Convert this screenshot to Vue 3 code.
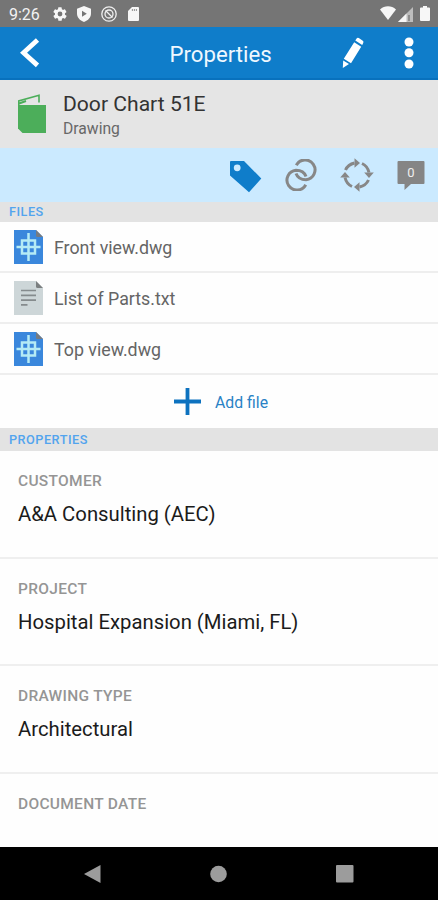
<template>
<div class="screen">
<div class="status-bar">
    <span class="clock">9:26</span>
    <svg class="gear" width="16" height="16" viewBox="0 0 24 24"><path d="M19.4 13a7.500 7.500 0 0 0 0-2l2.100-1.700a.5.5 0 0 0 .1-.6l-2-3.500a.5.5 0 0 0-.6-.2l-2.500 1a7.300 7.300 0 0 0-1.700-1l-.4-2.600a.5.5 0 0 0-.5-.4h-4a.5.5 0 0 0-.5.4L9 5a7.700 7.700 0 0 0-1.700 1l-2.500-1a.5.5 0 0 0-.6.200l-2 3.500a.5.5 0 0 0 .1.600L4.500 11a7.500 7.500 0 0 0 0 2l-2.100 1.700a.5.5 0 0 0-.1.600l2 3.500c.1.200.4.300.6.200l2.500-1a7.300 7.300 0 0 0 1.700 1l.4 2.600c0 .2.200.4.500.4h4c.3 0 .5-.2.500-.4L15 19a7.700 7.700 0 0 0 1.700-1l2.500 1c.2.100.5 0 .6-.2l2-3.500a.5.5 0 0 0-.1-.6zM12 15.600a3.600 3.600 0 1 1 0-7.200 3.600 3.600 0 0 1 0 7.200z" /></svg>
    <svg class="shield" width="14" height="16" viewBox="0 0 14 16"><path fill-rule="evenodd" d="M7 0l7 2.700v4.800c0 3.800-2.800 7-7 8.500-4.200-1.500-7-4.700-7-8.500V2.700zM5 4.800v6l4.800-3z" /></svg>
    <svg class="blocked" width="16" height="16" viewBox="0 0 16 16">
        <circle cx="8" cy="8" r="7.200" class="line" />
        <circle cx="8" cy="8" r="4" class="line" />
        <path d="M4.500 4.500l7 7" class="line" />
    </svg>
    <svg class="card" width="11" height="14" viewBox="0 0 11 14"><path fill-rule="evenodd" d="M4 0h6a1 1 0 0 1 1 1v12a1 1 0 0 1-1 1H1a1 1 0 0 1-1-1V4zM3.900 2v2h.8V2zm2 0v2h.8V2zm2 0v2h.8V2z" /></svg>
    <svg class="wifi" width="16" height="15" viewBox="0 0 16 15"><path d="M0 3.500C4.500-.8 11.500-.8 16 3.500L8 14z" /></svg>
    <svg class="signal" width="15" height="15" viewBox="0 0 15 15"><path d="M15 0v15H0z" opacity=".55" /><path d="M8.500 6.500V15H0z" /><path d="M11 8v6" class="line" /></svg>
    <svg class="battery" width="10" height="15" viewBox="0 0 10 15"><path d="M3 0h4v1.500h2q1 0 1 1V14q0 1-1 1H1q-1 0-1-1V2.500q0-1 1-1h2z" /></svg>
</div>

<header class="app-bar">
    <svg class="back" width="20" height="30" viewBox="0 0 20 30"><path d="M17.500 2L3.500 14.700l14 12.700" /></svg>
    <h1>Properties</h1>
    <svg class="pencil" width="22" height="32" viewBox="0 0 22 32"><path d="M12.200 5.200l7 4.500L9 26.300l-7.200-4.500zM13.300 3.500L14.600 1.600q.8-1.200 2.200-.5l4 2.600q1.200.9.400 2.200l-1 2zM1.200 23.500l5.800 3.600L.8 31z" /></svg>
    <svg class="dots" width="10" height="32" viewBox="0 0 10 32"><circle cx="5" cy="5" r="4.500" /><circle cx="5" cy="15.800" r="4.500" /><circle cx="5" cy="27" r="4.500" /></svg>
</header>

<section class="document">
    <svg width="28" height="40" viewBox="0 0 28 40">
        <path d="M0 11h28v28H4.500L0 34.500z" fill="#4cae5a" />
        <path d="M.7 13V7L21 1.200V8.500" fill="none" stroke="#4cae5a" stroke-width="1.600" />
        <path d="M1 9.500l7-2.500" stroke="#4cae5a" stroke-width="2" />
    </svg>
    <div>
        <h2>Door Chart 51E</h2>
        <p>Drawing</p>
    </div>
</section>

<nav class="tabs">
    <svg class="tag" width="32" height="32" viewBox="0 0 32 32"><path fill-rule="evenodd" fill="#0f7dca" d="M1 0h13l17.300 17.500L19 31.300 0 14.500V1q0-1 1-1zM7.200 3.400a3.400 3.400 0 1 0 0 6.800 3.400 3.400 0 0 0 0-6.800z" /></svg>
    <svg width="32" height="32" viewBox="0 0 32 32" fill="none" stroke="#878787" stroke-width="3">
        <path d="M11.300 6.300A9.900 9.900 0 1 1 21 20.700C15.500 20.700 12.300 18 11 14.500" />
        <path d="M20.700 25.700A9.900 9.900 0 1 1 11 11.300C16.500 11.300 19.700 14 21 17.500" />
    </svg>
    <svg width="34" height="34" viewBox="0 0 34 34">
        <g v-for="turn in [0, 90, 180, 270]" :key="turn" :transform="`rotate(${turn} 17 17)`">
            <path d="M5.500 12Q8 6.500 14.500 5" fill="none" stroke="#878787" stroke-width="3" />
            <path d="M14.500.2l5.500 4.800-5.500 4.800z" fill="#878787" />
        </g>
    </svg>
    <div class="comments">
        <svg width="28" height="29" viewBox="0 0 28 29"><path d="M1.500 0h25Q27.500 0 27.500 1v21q0 1-1 1H14l-6.500 6v-6h-6q-1 0-1-1V1q0-1 1-1z" fill="#858585" /></svg>
        <span>0</span>
    </div>
</nav>

<div class="section-title">FILES</div>
<ul class="files">
    <li v-for="file in files" :key="file.name">
        <svg v-if="file.type === 'dwg'" width="29" height="34" viewBox="0 0 29 34">
            <path d="M0 0h22l7 7v27H0z" fill="#3a87dc" />
            <path d="M22 0l7 7h-5.500Q22 7 22 5.500z" fill="#777b80" />
            <path d="M14.500 3v28M2.500 17h24M8 10.500h13v13H8z" fill="none" stroke="#b5ebf5" stroke-width="2.500" />
        </svg>
        <svg v-else width="29" height="34" viewBox="0 0 29 34">
            <path d="M0 0h22l7 7v27H0z" fill="#cdd6d8" />
            <path d="M22 0l7 7h-5.500Q22 7 22 5.500z" fill="#7b7f80" />
            <path d="M7 9.500h15M7 14.300h15M7 19.200h15M7 23.800h6.500" stroke="#858b8d" stroke-width="1.700" />
        </svg>
        <span>{{ file.name }}</span>
    </li>
</ul>
<button class="add-file" type="button">
    <svg width="27" height="27" viewBox="0 0 27 27"><path d="M13.500 0v27M0 13.500h27" stroke="#0d72bf" stroke-width="3.800" /></svg>
    <span>Add file</span>
</button>

<div class="section-title properties-title">PROPERTIES</div>
<dl class="properties">
    <div v-for="item in properties" :key="item.label" class="property">
        <dt>{{ item.label }}</dt>
        <dd>{{ item.value }}</dd>
    </div>
</dl>

<div class="system-nav">
    <svg width="17" height="18" viewBox="0 0 17 18"><path d="M16.500 0v18L0 9z" /></svg>
    <svg width="17" height="18" viewBox="0 0 17 18"><circle cx="8.500" cy="9" r="8.300" /></svg>
    <svg width="18" height="18" viewBox="0 0 18 18"><rect width="17.500" height="17.500" rx="1" /></svg>
</div>
</div>
</template>

<script setup>
const files = [
{ name: 'Front view.dwg', type: 'dwg' },
{ name: 'List of Parts.txt', type: 'txt' },
{ name: 'Top view.dwg', type: 'dwg' }
]

const properties = [
{ label: 'CUSTOMER', value: 'A&A Consulting (AEC)' },
{ label: 'PROJECT', value: 'Hospital Expansion (Miami, FL)' },
{ label: 'DRAWING TYPE', value: 'Architectural' },
{ label: 'DOCUMENT DATE', value: '' }
]
</script>

<style>
body {
margin: 0;
}
</style>

<style scoped>
.screen {
width: 438px;
height: 900px;
display: flex;
flex-direction: column;
overflow: hidden;
background: #fefefe;
font-family: Roboto, sans-serif;
}

.screen > * {
flex-shrink: 0;
box-sizing: border-box;
}

svg {
display: block;
flex-shrink: 0;
}

h1, h2, p, ul, dl, dd {
margin: 0;
padding: 0;
font-weight: 400;
}

.status-bar {
height: 27px;
padding: 0 8px 0 9px;
display: flex;
align-items: center;
background: #757575;
color: #f2f2f2;
}

.status-bar svg {
fill: #f7f7f7;
}

.status-bar .line {
fill: none;
stroke: #f0f0f0;
stroke-width: 1.3;
}

.status-bar .signal .line {
stroke: #757575;
}

.clock {
width: 43px;
font-size: 16px;
line-height: 27px;
padding-top: 2px;
box-sizing: border-box;
}

.shield {
margin-left: 9px;
}

.blocked {
margin-left: 10px;
}

.card {
margin-left: 11px;
}

.wifi {
margin-left: auto;
}

.signal {
margin: 1px 7px 0 2px;
}

.app-bar {
height: 53px;
padding: 0 24px 0 20px;
display: flex;
align-items: center;
background: #0f7dca;
border-bottom: 2px solid #0871bd;
}

.app-bar svg {
fill: #fff;
}

.app-bar .back {
fill: none;
stroke: #fff;
stroke-width: 4.8;
}

h1 {
margin-left: 129.5px;
padding-top: 2px;
font-size: 22.2px;
line-height: 30px;
color: #eff8ff;
}

.pencil {
margin-left: auto;
}

.dots {
margin-left: 40px;
}

.document {
height: 68px;
padding: 14px 18px 0;
display: flex;
gap: 17px;
background: #e5e5e5;
}

h2 {
margin-top: -3px;
font-size: 21.1px;
line-height: 26px;
color: #333;
}

p {
font-size: 15.7px;
line-height: 22px;
margin-top: 1px;
color: #686868;
}

.tabs {
height: 54px;
padding-right: 13px;
display: flex;
justify-content: flex-end;
align-items: center;
gap: 23px;
background: #cbeaff;
}

.tag {
margin-top: 3px;
}

.comments {
position: relative;
}

.comments span {
position: absolute;
top: 3px;
left: 0;
width: 28px;
text-align: center;
font-size: 13px;
line-height: 17px;
color: #eee;
}

.section-title {
height: 20px;
padding-left: 9px;
font-size: 12.7px;
font-weight: 500;
letter-spacing: .5px;
line-height: 20px;
color: #52a4ee;
background: #e3e3e3;
}

.properties-title {
height: 23px;
line-height: 24px;
}

.files {
list-style: none;
}

.files li {
height: 51px;
padding: 0 14px;
display: flex;
align-items: center;
gap: 11px;
box-sizing: border-box;
border-bottom: 2px solid #eee;
font-size: 17.8px;
color: #656565;
}

.files span {
padding-top: 2px;
}

.add-file {
height: 53px;
border: none;
padding: 0 0 0 174px;
display: flex;
align-items: center;
gap: 14px;
background: none;
font-family: inherit;
font-size: 15.8px;
color: #2a82c5;
}

.add-file span {
padding-top: 2px;
}

.properties {
height: 396px;
}

.property {
height: 107.7px;
padding: 19px 18px 0;
box-sizing: border-box;
border-bottom: 2px solid #efefef;
}

.property:last-child {
border-bottom: none;
height: 73px;
}

dt {
font-size: 15.5px;
font-weight: 500;
letter-spacing: .3px;
line-height: 22px;
color: #959595;
}

dd {
margin-top: 8px;
font-size: 20.3px;
line-height: 28px;
color: #1b1b1b;
}

.system-nav {
height: 53px;
padding: 0 84px;
display: flex;
align-items: center;
justify-content: space-between;
background: #000;
}

.system-nav svg {
fill: #9c9c9c;
}
</style>
